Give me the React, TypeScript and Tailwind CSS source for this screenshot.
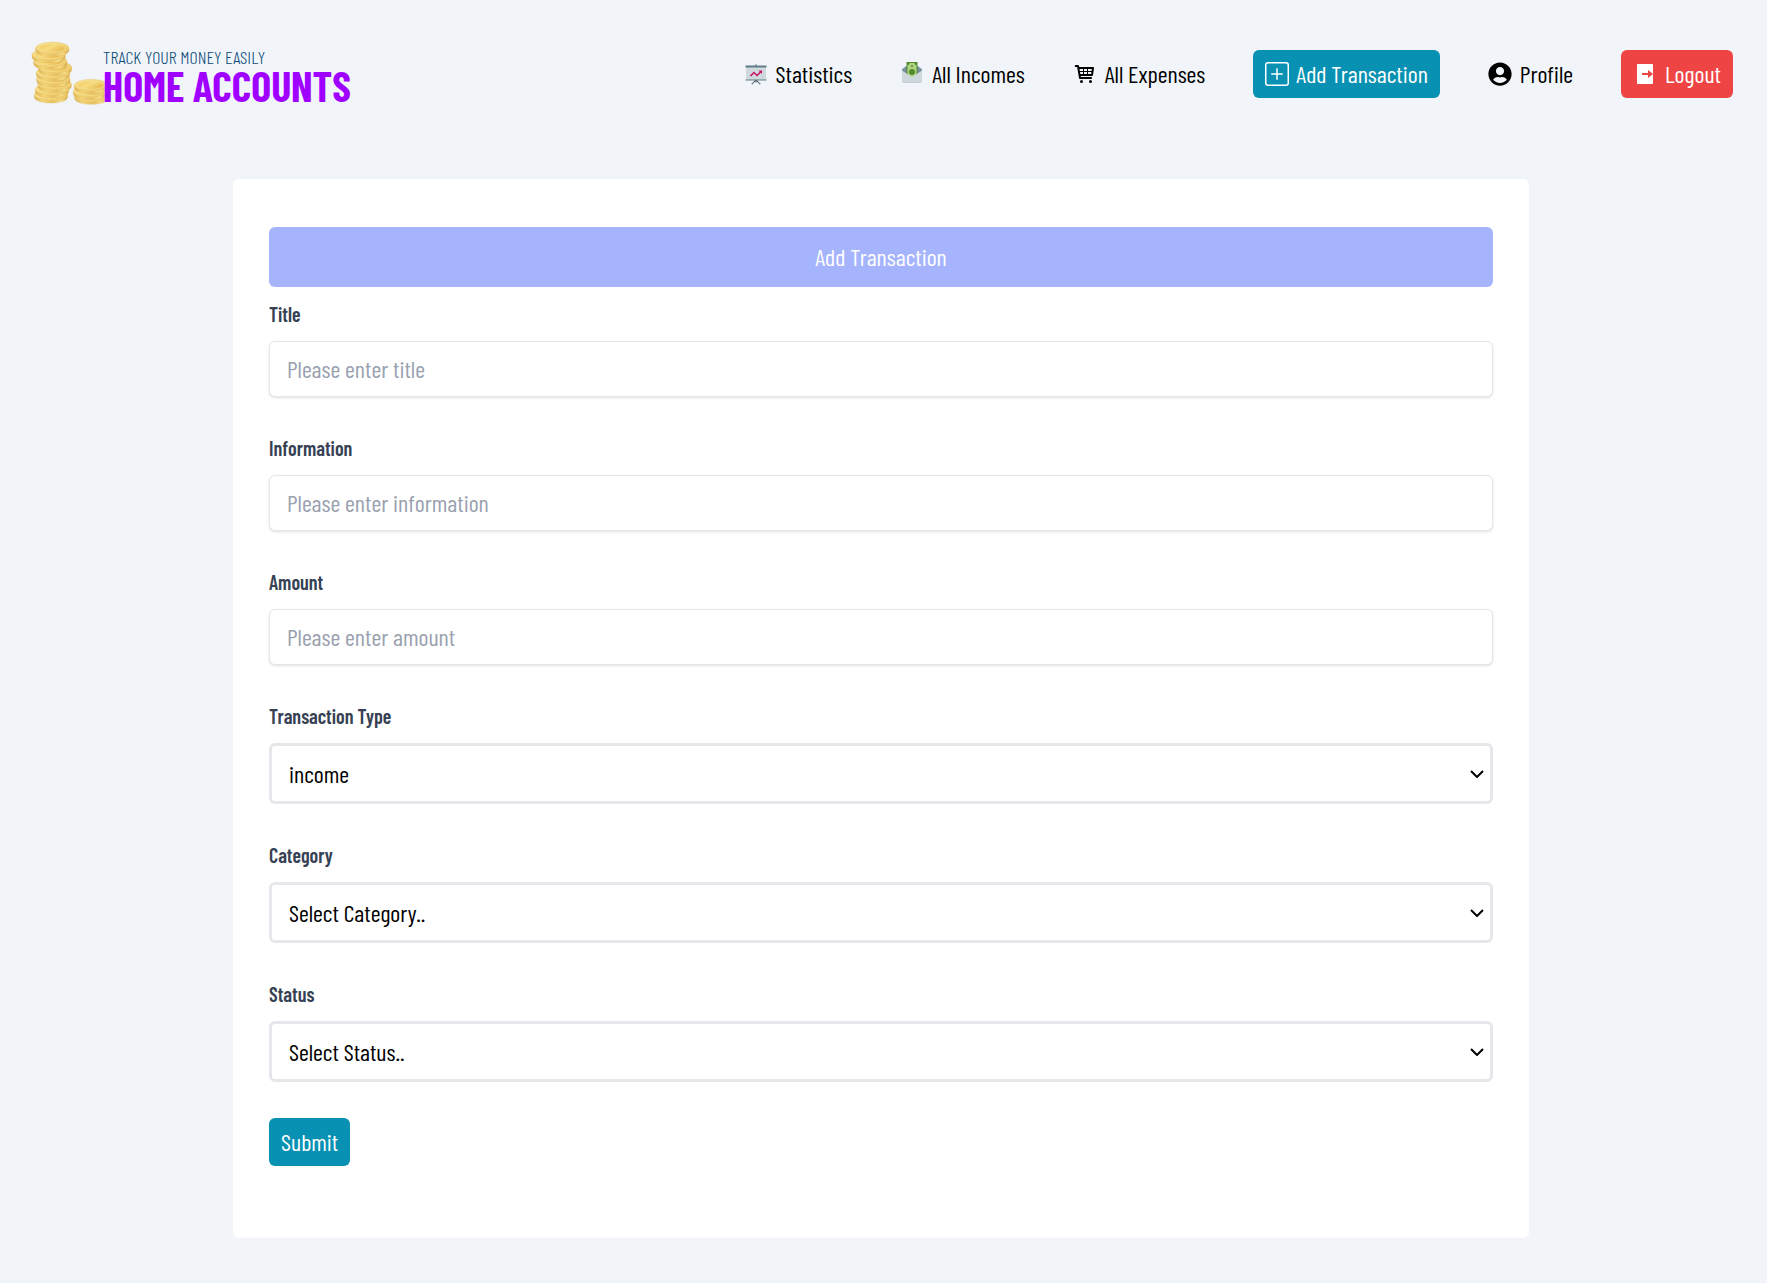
import React from "react";
import { FcStatistics, FcMoneyTransfer } from "react-icons/fc";
import { BsPlusSquare } from "react-icons/bs";
import { FaUserCircle } from "react-icons/fa";
import { RiLogoutBoxRFill } from "react-icons/ri";
import { TiShoppingCart } from "react-icons/ti";

type Coin = [cx: number, cy: number];

const tallStack: Coin[] = [
  [60, 170],
  [63, 154],
  [71, 138],
  [67, 122],
  [66, 104],
  [72, 88],
  [58, 70],
  [53, 50],
  [64, 30],
];

const shortStack: Coin[] = [
  [181, 174],
  [177, 160],
  [180, 142],
];

function CoinStack({ coins }: { coins: Coin[] }) {
  return (
    <g>
      {coins.map(([cx, cy], i) => (
        <g key={i} transform={`translate(${cx} ${cy})`}>
          <path
            d="M-50 -6 V1 C-50 12 -28 19 0 19 C28 19 50 12 50 1 V-6 Z"
            fill="url(#coin-edge)"
            stroke="#e0b55c"
            strokeWidth="1"
          />
          <ellipse cx="0" cy="-6" rx="50" ry="18" fill="url(#coin-face)" stroke="#e6be66" strokeWidth="1" />
          <ellipse cx="0" cy="-6" rx="39" ry="12" fill="url(#coin-inner)" stroke="#f6e08e" strokeWidth="2" />
        </g>
      ))}
    </g>
  );
}

function Logo() {
  return (
    <a href="#home" className="flex h-[68px] items-end" aria-label="Home Accounts">
      <svg viewBox="0 0 231 195" className="mb-[3px] h-[65px] w-[77px] shrink-0" aria-hidden="true">
        <defs>
          <linearGradient id="coin-edge" x1="0" x2="1" y1="0" y2="0">
            <stop offset="0" stopColor="#dcb050" />
            <stop offset="0.25" stopColor="#f4d878" />
            <stop offset="0.55" stopColor="#e8c060" />
            <stop offset="0.8" stopColor="#f6df8a" />
            <stop offset="1" stopColor="#d6a646" />
          </linearGradient>
          <linearGradient id="coin-face" x1="0" x2="1" y1="0" y2="1">
            <stop offset="0" stopColor="#fae494" />
            <stop offset="1" stopColor="#eac564" />
          </linearGradient>
          <linearGradient id="coin-inner" x1="0" x2="1" y1="0" y2="0.6">
            <stop offset="0" stopColor="#eec358" />
            <stop offset="0.5" stopColor="#f7dc80" />
            <stop offset="1" stopColor="#e6b850" />
          </linearGradient>
        </defs>
        <CoinStack coins={tallStack} />
        <CoinStack coins={shortStack} />
      </svg>
      <span className="-ml-[5px] flex flex-col pb-[3px] uppercase whitespace-nowrap">
        <span className="text-lg leading-4 font-light text-[#0c4a7a]">Track your money easily</span>
        <span className="text-[42px] leading-10 font-bold text-[#a000ff]">Home Accounts</span>
      </span>
    </a>
  );
}

const links = [
  { label: "Statistics", icon: FcStatistics },
  { label: "All Incomes", icon: FcMoneyTransfer },
  { label: "All Expenses", icon: TiShoppingCart },
];

function Nav() {
  return (
    <nav className="flex items-center gap-12 whitespace-nowrap">
      {links.map(({ label, icon: Icon }) => (
        <a key={label} href="#" className="flex items-center gap-2">
          <Icon size={24} aria-hidden="true" />
          {label}
        </a>
      ))}
      <a href="#" className="flex items-center gap-[7px] rounded-md bg-[#0891b2] px-3 py-2 text-white">
        <BsPlusSquare size={24} aria-hidden="true" />
        Add Transaction
      </a>
      <a href="#" className="flex items-center gap-2">
        <FaUserCircle size={24} aria-hidden="true" />
        Profile
      </a>
      <button type="button" className="flex items-center gap-2 rounded-md bg-[#ef4444] px-3 py-2 text-white">
        <RiLogoutBoxRFill size={24} aria-hidden="true" />
        Logout
      </button>
    </nav>
  );
}

function Label({ id, children }: { id: string; children: string }) {
  return (
    <label htmlFor={id} className="mb-[14px] block text-xl leading-[26px] font-semibold text-gray-700">
      {children}
    </label>
  );
}

function TextField({ id, label, placeholder, type = "text" }: { id: string; label: string; placeholder: string; type?: string }) {
  return (
    <div>
      <Label id={id}>{label}</Label>
      <input
        id={id}
        type={type}
        placeholder={placeholder}
        className="block h-14 w-full rounded-md border border-gray-200 bg-white px-[17px] pb-[2px] shadow-sm placeholder:text-gray-400"
      />
    </div>
  );
}

function SelectField({ id, label, options }: { id: string; label: string; options: string[] }) {
  return (
    <div>
      <Label id={id}>{label}</Label>
      <div className="relative">
        <select
          id={id}
          className="block h-[61px] w-full appearance-none rounded-md border-3 border-gray-200 bg-white px-[17px] text-black"
        >
          {options.map((o) => (
            <option key={o}>{o}</option>
          ))}
        </select>
        <svg
          viewBox="0 0 14 8"
          className="pointer-events-none absolute inset-y-0 right-[9px] my-auto h-2 w-[14px]"
          fill="none"
          stroke="#000"
          strokeWidth="2"
          aria-hidden="true"
        >
          <path d="M1 1 L7 7 L13 1" />
        </svg>
      </div>
    </div>
  );
}

export default function App() {
  return (
    <div className="min-h-screen bg-[#f1f5f9] pb-11 font-['Barlow_Condensed',sans-serif] text-2xl leading-8 text-black">
      <header className="flex items-center justify-between pt-10 pr-[34px] pl-[31px]">
        <Logo />
        <Nav />
      </header>
      <main className="mt-[71px] pr-[5px]">
        <form className="mx-auto max-w-[1296px] rounded-md bg-white px-9 pt-12 pb-[72px]" onSubmit={(e) => e.preventDefault()}>
          <h1 className="mb-[14px] rounded-md bg-[#a5b4fc] py-[14px] text-center text-white">Add Transaction</h1>
          <div className="flex flex-col gap-[38px]">
            <TextField id="title" label="Title" placeholder="Please enter title" />
            <TextField id="information" label="Information" placeholder="Please enter information" />
            <TextField id="amount" label="Amount" placeholder="Please enter amount" type="number" />
            <SelectField id="type" label="Transaction Type" options={["income", "expense"]} />
            <SelectField id="category" label="Category" options={["Select Category.."]} />
            <SelectField id="status" label="Status" options={["Select Status.."]} />
          </div>
          <button type="submit" className="mt-9 rounded-md bg-[#0891b2] px-3 py-2 text-white">
            Submit
          </button>
        </form>
      </main>
    </div>
  );
}
